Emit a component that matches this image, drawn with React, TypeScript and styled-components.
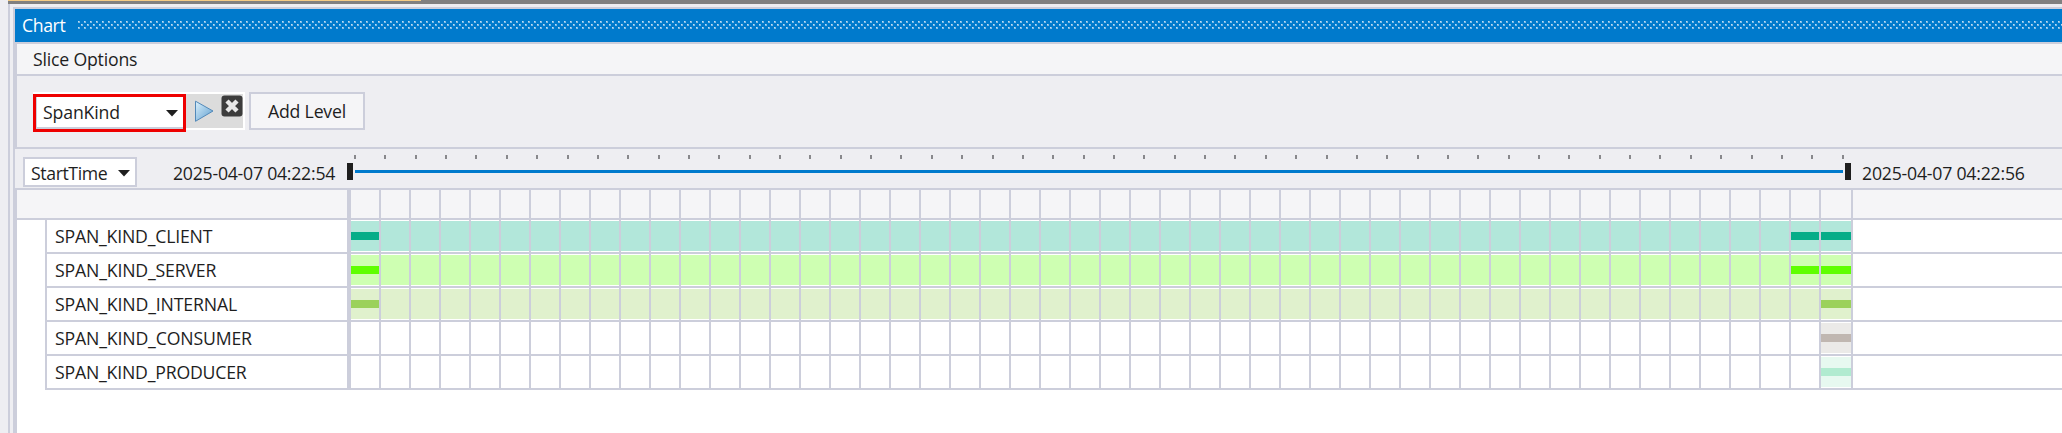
import React from "react";
import styled, { createGlobalStyle } from "styled-components";

const LINE = "#cccedb";
const CHROME = "#eeeef2";

const GlobalStyle = createGlobalStyle`
  * { box-sizing: border-box; }
  body { margin: 0; background: ${CHROME}; overflow: hidden; }
`;

const Window = styled.div`
  width: 2062px;
  height: 433px;
  padding-left: 8px;
  overflow: hidden;
  background: ${CHROME};
  color: #1e1e1e;
  font-family: "Open Sans", "Noto Sans", sans-serif;
  font-size: 17.7px;
  display: flex;
  flex-direction: column;
`;

const TopEdge = styled.div`
  height: 4px;
  flex: none;
  background: #808080;
`;

const ActiveTab = styled.div`
  width: 413px;
  height: 1px;
  background: #f5cc84;
`;

const Dock = styled.div`
  flex: 1;
  border-left: 2px solid ${LINE};
  padding: 3px 0 0 3px;
`;

const Panel = styled.section`
  height: 426px;
  border-top: 2px solid ${LINE};
  border-left: 2px solid ${LINE};
`;

const Text = styled.span<{ $spacing?: number }>`
  white-space: nowrap;
  line-height: 24px;
  letter-spacing: ${(p) => p.$spacing ?? 0}px;
`;

const TitleBar = styled.header`
  height: 33px;
  padding-left: 7px;
  display: flex;
  align-items: center;
  background: #007acc;
  color: #fff;
`;

const TitleText = styled(Text)`
  width: 56px;
  margin-bottom: 1px;
`;

const Grip = styled.svg`
  flex: 1;
  height: 8px;
  margin-bottom: 1px;
`;

const Inset = styled.div`
  border-left: 2px solid ${LINE};
`;

const SliceHeader = styled.div`
  height: 34px;
  padding: 0 0 0 16px;
  display: flex;
  align-items: center;
  background: #f5f5f7;
  border: solid ${LINE};
  border-width: 2px 0;
`;

const SliceBody = styled.div`
  height: 73px;
  padding: 16px;
  display: flex;
  align-items: flex-start;
  gap: 4px;
  border-bottom: 2px solid ${LINE};
`;

const Level = styled.div`
  width: 212px;
  height: 38px;
  padding: 2px 2px 2px 0;
  display: flex;
  background: #fff;
`;

const LevelSelect = styled.div`
  width: 153px;
  height: 38px;
  padding: 0 5px 0 7px;
  display: flex;
  align-items: center;
  justify-content: space-between;
  background: #fff;
  border: 3px solid #ee0000;
  box-shadow: inset 0 -2px ${LINE}, inset 1px 0 ${LINE};
`;

const LevelName = styled(Text)`
  margin-bottom: 2px;
`;

const LevelActions = styled.div`
  width: 57px;
  height: 34px;
  background: #dcdcdc;
`;

const AddLevel = styled.button`
  width: 116px;
  height: 38px;
  padding: 0;
  background: #f5f5f7;
  border: 2px solid ${LINE};
  color: inherit;
  font: inherit;
`;

const RangeRow = styled.div`
  height: 39px;
  display: flex;
  align-items: flex-start;
`;

const FieldSelect = styled.div`
  width: 114px;
  height: 30px;
  margin: 8px 0 0 8px;
  padding: 2px 5px 0 6px;
  display: flex;
  align-items: center;
  justify-content: space-between;
  background: #fff;
  border: 2px solid ${LINE};
`;

const StartDate = styled(Text)`
  width: 174px;
  margin: 12px 0 0 36px;
`;

const EndDate = styled(Text)`
  margin: 12px 0 0 11px;
`;

const Range = styled.div`
  width: 1504px;
`;

const Ticks = styled.div`
  height: 4px;
  margin: 6px 7px 4px;
  display: flex;
  justify-content: space-between;
`;

const Tick = styled.i`
  width: 2px;
  height: 4px;
  background: #88888c;
`;

const Slider = styled.div`
  height: 17px;
  display: flex;
  align-items: center;
  justify-content: space-between;
`;

const Handle = styled.div`
  width: 6px;
  height: 17px;
  background: #1e1e1e;
`;

const Track = styled.div`
  width: 1488px;
  height: 3px;
  background: #007acc;
`;

const Grid = styled.div`
  height: 245px;
  background: #fff;
  border-top: 2px solid ${LINE};
  border-left: 2px solid ${LINE};
`;

const HeaderRow = styled.div`
  height: 30px;
  display: flex;
  background: #f5f5f7;
  border-bottom: 2px solid ${LINE};
`;

const HeaderLabel = styled.div`
  width: 334px;
  border-right: 4px solid ${LINE};
`;

const Row = styled.div`
  height: 34px;
  margin-left: 28px;
  display: flex;
  border-left: 2px solid ${LINE};
  border-bottom: 2px solid ${LINE};
`;

const RowLabel = styled.div`
  width: 304px;
  padding: 4px 0 0 8px;
  border-right: 4px solid ${LINE};
`;

const Slot = styled.div<{ $last?: boolean; $fill?: string }>`
  width: ${(p) => (p.$last ? 32 : 30)}px;
  padding: 1px 0;
  display: flex;
  align-items: center;
  border-right: 2px solid ${LINE};
  background: ${(p) => p.$fill ?? "transparent"} content-box;
`;

const Bar = styled.div<{ $color: string }>`
  width: 100%;
  height: 8px;
  background: ${(p) => p.$color};
`;

const SLOTS = Array.from({ length: 50 }, (_, i) => i);

type Series = {
  name: string;
  spacing: number;
  fill: string;
  color: string;
  from: number;
  bars: number[];
};

const SERIES: Series[] = [
  { name: "SPAN_KIND_CLIENT", spacing: -0.2, fill: "#b2e7da", color: "#05ad88", from: 0, bars: [0, 48, 49] },
  { name: "SPAN_KIND_SERVER", spacing: -0.17, fill: "#ceffb2", color: "#5eff00", from: 0, bars: [0, 48, 49] },
  { name: "SPAN_KIND_INTERNAL", spacing: -0.15, fill: "#e0f1cd", color: "#9bd15b", from: 0, bars: [0, 49] },
  { name: "SPAN_KIND_CONSUMER", spacing: -0.16, fill: "#ebeae8", color: "#c0b7b1", from: 49, bars: [49] },
  { name: "SPAN_KIND_PRODUCER", spacing: -0.2, fill: "#e7f9f0", color: "#b1ebd0", from: 49, bars: [49] },
];

const CaretIcon = styled.svg<{ $drop?: number }>`
  flex: none;
  margin-top: ${(p) => p.$drop ?? 0}px;
`;

const Caret = ({ drop }: { drop?: number }) => (
  <CaretIcon $drop={drop} width="12" height="7" viewBox="0 0 12 7">
    <path d="M0 0H12L6 6.5Z" fill="#1e1e1e" />
  </CaretIcon>
);

const ActionIcons = () => (
  <svg width="57" height="34" viewBox="0 0 57 34">
    <defs>
      <linearGradient id="play" x1="0" y1="0" x2="1" y2="1">
        <stop offset="0" stopColor="#dcf1fc" />
        <stop offset="1" stopColor="#5d9dce" />
      </linearGradient>
    </defs>
    <path d="M9.5 7.2V27.3L27 17Z" fill="url(#play)" stroke="#5289b9" strokeLinejoin="round" />
    <rect x="35.5" y="1.5" width="21" height="21" rx="3" fill="#3c3c3c" />
    <path d="M41 7L51 17M51 7L41 17" stroke="#e8e8e8" strokeWidth="4.5" />
  </svg>
);

export default function App() {
  return (
    <>
      <GlobalStyle />
      <Window>
        <TopEdge>
          <ActiveTab />
        </TopEdge>
        <Dock>
          <Panel>
            <TitleBar>
              <TitleText $spacing={-0.4}>Chart</TitleText>
              <Grip>
                <defs>
                  <pattern id="grip" width="6" height="8" patternUnits="userSpaceOnUse">
                    <path d="M0 0h2v2h-2zM3 3h2v2h-2zM0 6h2v2h-2z" fill="#7fbbe5" />
                    <path d="M0 0h1v1h-1zM3 3h1v1h-1zM0 6h1v1h-1z" fill="#c4dff2" />
                  </pattern>
                </defs>
                <rect width="100%" height="8" fill="url(#grip)" />
              </Grip>
            </TitleBar>
            <Inset>
              <SliceHeader>
                <Text $spacing={-0.2}>Slice Options</Text>
              </SliceHeader>
              <SliceBody>
                <Level>
                  <LevelSelect>
                    <LevelName $spacing={-0.15}>SpanKind</LevelName>
                    <Caret />
                  </LevelSelect>
                  <LevelActions>
                    <ActionIcons />
                  </LevelActions>
                </Level>
                <AddLevel>
                  <Text $spacing={-0.2}>Add Level</Text>
                </AddLevel>
              </SliceBody>
            </Inset>
            <RangeRow>
              <FieldSelect>
                <Text $spacing={-0.4}>StartTime</Text>
                <Caret drop={1} />
              </FieldSelect>
              <StartDate $spacing={-0.25}>2025-04-07 04:22:54</StartDate>
              <Range>
                <Ticks>
                  {SLOTS.map((i) => (
                    <Tick key={i} />
                  ))}
                </Ticks>
                <Slider>
                  <Handle />
                  <Track />
                  <Handle />
                </Slider>
              </Range>
              <EndDate $spacing={-0.22}>2025-04-07 04:22:56</EndDate>
            </RangeRow>
            <Grid>
              <HeaderRow>
                <HeaderLabel />
                {SLOTS.map((i) => (
                  <Slot key={i} $last={i === 49} />
                ))}
              </HeaderRow>
              {SERIES.map((s) => (
                <Row key={s.name}>
                  <RowLabel>
                    <Text $spacing={s.spacing}>{s.name}</Text>
                  </RowLabel>
                  {SLOTS.map((i) => (
                    <Slot key={i} $last={i === 49} $fill={i >= s.from ? s.fill : undefined}>
                      {s.bars.includes(i) && <Bar $color={s.color} />}
                    </Slot>
                  ))}
                </Row>
              ))}
            </Grid>
          </Panel>
        </Dock>
      </Window>
    </>
  );
}
